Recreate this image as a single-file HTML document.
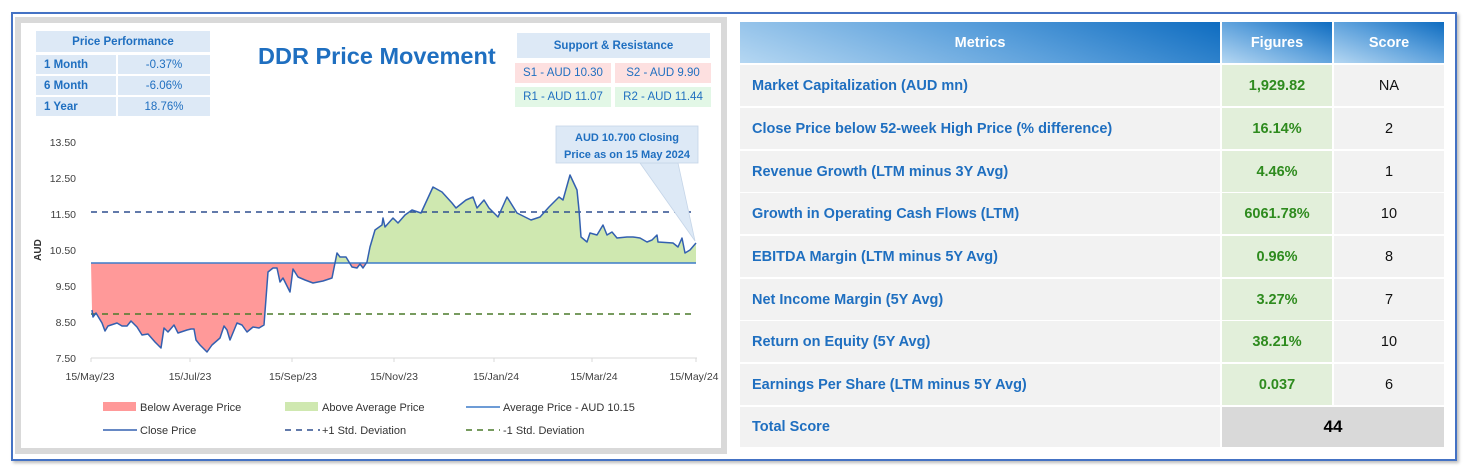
<!DOCTYPE html>
<html><head><meta charset="utf-8"><style>
*{margin:0;padding:0;box-sizing:border-box}
body{width:1467px;height:472px;background:#fff;position:relative;overflow:hidden;font-family:"Liberation Sans",Arial,sans-serif}
.abs{position:absolute}
.outer{left:11px;top:12px;width:1446px;height:449px;border:2px solid #4472c4;box-shadow:2px 2px 3px #bbb}
.gp{left:15px;top:17px;width:712px;height:437px;background:#d9d9d9}
.wp{left:21px;top:23px;width:700px;height:425px;background:#fff}
.c{display:flex;align-items:center;justify-content:center;font-size:11.5px;color:#1f6fc0}
.pp{background:#dde9f6}
.b{font-weight:bold}
.tbl div{position:absolute;display:flex;align-items:center;font-size:14.5px;font-weight:bold}
.m{left:740px;width:480px;background:#f2f2f2;color:#1f6fc0;padding-left:12px}
.f{left:1222px;width:110px;background:#e2efda;color:#2e8b1e;justify-content:center}
.s{left:1334px;width:110px;background:#f2f2f2;color:#111;justify-content:center;font-weight:normal!important}
.h{top:22px;height:41px;color:#fff;justify-content:center;background:linear-gradient(200deg,#0e6cc0 0%,#5a9fdb 45%,#b5d7f2 100%)}
</style></head><body>
<div class="abs outer"></div>
<div class="abs gp"></div>
<div class="abs wp"></div>

<div class="abs c pp b" style="left:36px;top:31px;width:174px;height:21px">Price Performance</div>
<div class="abs c pp b" style="left:36px;top:55px;width:80px;height:19px;justify-content:flex-start;padding-left:8px">1 Month</div>
<div class="abs c pp" style="left:118px;top:55px;width:92px;height:19px">-0.37%</div>
<div class="abs c pp b" style="left:36px;top:76px;width:80px;height:19px;justify-content:flex-start;padding-left:8px">6 Month</div>
<div class="abs c pp" style="left:118px;top:76px;width:92px;height:19px">-6.06%</div>
<div class="abs c pp b" style="left:36px;top:97px;width:80px;height:19px;justify-content:flex-start;padding-left:8px">1 Year</div>
<div class="abs c pp" style="left:118px;top:97px;width:92px;height:19px">18.76%</div>

<div class="abs" style="left:258px;top:43px;font-size:23.5px;font-weight:bold;color:#1f6fc0">DDR Price Movement</div>

<div class="abs c pp b" style="left:517px;top:33px;width:193px;height:25px">Support &amp; Resistance</div>
<div class="abs c" style="left:515px;top:63px;width:96px;height:20px;background:#fde0e0">S1 - AUD 10.30</div>
<div class="abs c" style="left:615px;top:63px;width:96px;height:20px;background:#fde0e0">S2 - AUD 9.90</div>
<div class="abs c" style="left:515px;top:87px;width:96px;height:20px;background:#e2f7e6">R1 - AUD 11.07</div>
<div class="abs c" style="left:615px;top:87px;width:96px;height:20px;background:#e2f7e6">R2 - AUD 11.44</div>

<svg class="abs" style="left:0;top:0" width="730" height="460" font-family="Liberation Sans,Arial,sans-serif">
<defs>
<clipPath id="lo"><rect x="0" y="263" width="730" height="200"/></clipPath>
<clipPath id="hi"><rect x="0" y="0" width="730" height="263"/></clipPath>
</defs>
<g font-size="10.5" fill="#404040" text-anchor="end">
<text x="76" y="146">13.50</text><text x="76" y="182">12.50</text><text x="76" y="218">11.50</text>
<text x="76" y="254">10.50</text><text x="76" y="290">9.50</text><text x="76" y="326">8.50</text><text x="76" y="362">7.50</text>
</g>
<text transform="translate(41,250) rotate(-90)" font-size="10" font-weight="bold" fill="#333" text-anchor="middle">AUD</text>
<g>
<polygon clip-path="url(#lo)" fill="#ff9999" points="91,263 92,310 93,317 96,313 102,323 105,331 108,326 117,323 122,326 127,326 131,321 137,327 142,335 148,334 155,342 161,348 164,328 168,332 174,325 178,333 187,330 191,329 194,329 196,340 200,345 207,352 212,345 220,338 224,326 227,330 230,340 237,323 242,325 247,332 253,327 259,328 264,325 268,272 273,268 277,268 280,282 283,278 290,292 293,269 298,277 305,280 313,283 323,281 332,278 337,253 340,257 346,257 352,267 357,268 360,264 363,268 367,262 370,247 375,230 380,263"/>
<polygon clip-path="url(#hi)" fill="#cfe8b0" points="330,263 332,278 337,253 340,257 346,257 352,267 357,268 360,264 363,268 367,262 370,247 375,230 382,225 383,218 385,227 393,218 398,223 405,215 412,210 421,213 433,187 442,192 452,203 456,208 466,200 473,197 477,208 484,200 489,208 498,217 507,197 517,213 531,220 540,217 549,207 559,197 563,200 570,175 577,190 579,210 581,237 587,242 590,233 597,235 603,225 607,235 612,232 617,238 627,237 633,237 640,238 647,242 652,240 657,235 658,242 673,243 678,247 682,238 685,253 690,250 696,243 696,263"/>
</g>
<line x1="91" y1="263" x2="696" y2="263" stroke="#3d7cc9" stroke-width="1.6"/>
<line x1="91" y1="212" x2="696" y2="212" stroke="#2f4f8f" stroke-width="1.4" stroke-dasharray="6,5"/>
<line x1="91" y1="314" x2="696" y2="314" stroke="#4a7a2a" stroke-width="1.4" stroke-dasharray="6,5"/>
<polyline fill="none" stroke="#3360b0" stroke-width="1.5" stroke-linejoin="round" points="92,310 93,317 96,313 102,323 105,331 108,326 117,323 122,326 127,326 131,321 137,327 142,335 148,334 155,342 161,348 164,328 168,332 174,325 178,333 187,330 191,329 194,329 196,340 200,345 207,352 212,345 220,338 224,326 227,330 230,340 237,323 242,325 247,332 253,327 259,328 264,325 268,272 273,268 277,268 280,282 283,278 290,292 293,269 298,277 305,280 313,283 323,281 332,278 337,253 340,257 346,257 352,267 357,268 360,264 363,268 367,262 370,247 375,230 382,225 383,218 385,227 393,218 398,223 405,215 412,210 421,213 433,187 442,192 452,203 456,208 466,200 473,197 477,208 484,200 489,208 498,217 507,197 517,213 531,220 540,217 549,207 559,197 563,200 570,175 577,190 579,210 581,237 587,242 590,233 597,235 603,225 607,235 612,232 617,238 627,237 633,237 640,238 647,242 652,240 657,235 658,242 673,243 678,247 682,238 685,253 690,250 696,243"/>
<line x1="91" y1="358" x2="697" y2="358" stroke="#d9d9d9"/>
<g stroke="#d9d9d9"><line x1="91" y1="358" x2="91" y2="362"/><line x1="190" y1="358" x2="190" y2="362"/><line x1="292" y1="358" x2="292" y2="362"/><line x1="394" y1="358" x2="394" y2="362"/><line x1="494" y1="358" x2="494" y2="362"/><line x1="592" y1="358" x2="592" y2="362"/><line x1="696" y1="358" x2="696" y2="362"/></g>
<g font-size="10.5" fill="#404040" text-anchor="middle">
<text x="90" y="380">15/May/23</text><text x="190" y="380">15/Jul/23</text><text x="293" y="380">15/Sep/23</text>
<text x="394" y="380">15/Nov/23</text><text x="496" y="380">15/Jan/24</text><text x="594" y="380">15/Mar/24</text><text x="694" y="380">15/May/24</text>
</g>
<polygon points="640,163 678,163 695,241" fill="#dde9f6" stroke="#c5d5e8" stroke-width="0.8"/>
<rect x="556" y="126" width="142" height="37" fill="#dde9f6" stroke="#c5d5e8" stroke-width="0.8"/>
<g font-size="11" font-weight="bold" fill="#1f6fc0" text-anchor="middle">
<text x="627" y="141">AUD 10.700 Closing</text><text x="627" y="158">Price as on 15 May 2024</text>
</g>
<g font-size="11" fill="#333">
<rect x="103" y="402" width="33" height="9" fill="#ff9999"/><text x="140" y="411">Below Average Price</text>
<rect x="285" y="402" width="33" height="9" fill="#cfe8b0"/><text x="322" y="411">Above Average Price</text>
<line x1="466" y1="407" x2="500" y2="407" stroke="#3d7cc9" stroke-width="1.6"/><text x="503" y="411">Average Price - AUD 10.15</text>
<line x1="103" y1="430" x2="137" y2="430" stroke="#3360b0" stroke-width="1.6"/><text x="140" y="434">Close Price</text>
<line x1="285" y1="430" x2="320" y2="430" stroke="#2f4f8f" stroke-width="1.4" stroke-dasharray="6,5"/><text x="322" y="434">+1 Std. Deviation</text>
<line x1="466" y1="430" x2="500" y2="430" stroke="#4a7a2a" stroke-width="1.4" stroke-dasharray="6,5"/><text x="503" y="434">-1 Std. Deviation</text>
</g>
</svg>

<div class="tbl">
<div class="h" style="left:740px;width:480px">Metrics</div>
<div class="h" style="left:1222px;width:110px">Figures</div>
<div class="h" style="left:1334px;width:110px">Score</div>

<div class="m" style="top:65px;height:41px">Market Capitalization (AUD mn)</div><div class="f" style="top:65px;height:41px">1,929.82</div><div class="s" style="top:65px;height:41px">NA</div>
<div class="m" style="top:108px;height:41px">Close Price below 52-week High Price (% difference)</div><div class="f" style="top:108px;height:41px">16.14%</div><div class="s" style="top:108px;height:41px">2</div>
<div class="m" style="top:151px;height:41px">Revenue Growth (LTM minus 3Y Avg)</div><div class="f" style="top:151px;height:41px">4.46%</div><div class="s" style="top:151px;height:41px">1</div>
<div class="m" style="top:193px;height:41px">Growth in Operating Cash Flows (LTM)</div><div class="f" style="top:193px;height:41px">6061.78%</div><div class="s" style="top:193px;height:41px">10</div>
<div class="m" style="top:236px;height:41px">EBITDA Margin (LTM minus 5Y Avg)</div><div class="f" style="top:236px;height:41px">0.96%</div><div class="s" style="top:236px;height:41px">8</div>
<div class="m" style="top:279px;height:41px">Net Income Margin (5Y Avg)</div><div class="f" style="top:279px;height:41px">3.27%</div><div class="s" style="top:279px;height:41px">7</div>
<div class="m" style="top:321px;height:41px">Return on Equity (5Y Avg)</div><div class="f" style="top:321px;height:41px">38.21%</div><div class="s" style="top:321px;height:41px">10</div>
<div class="m" style="top:364px;height:41px">Earnings Per Share (LTM minus 5Y Avg)</div><div class="f" style="top:364px;height:41px">0.037</div><div class="s" style="top:364px;height:41px">6</div>
<div class="m" style="top:407px;height:40px">Total Score</div>
<div style="left:1222px;top:407px;width:222px;height:40px;background:#d9d9d9;justify-content:center;font-size:17px;color:#000">44</div>
</div>
</body></html>
